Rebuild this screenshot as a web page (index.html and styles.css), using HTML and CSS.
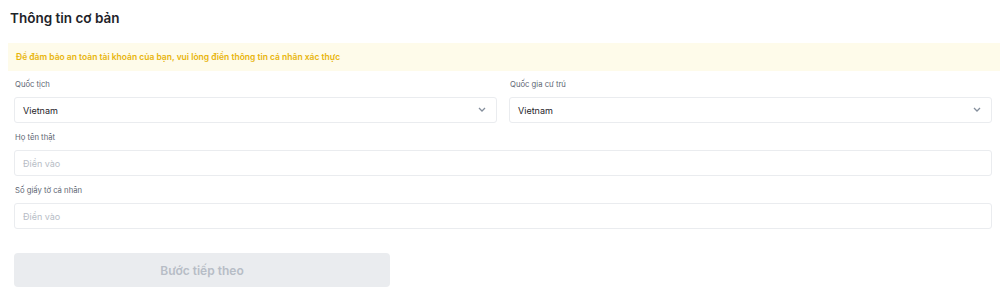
FILE: index.html
```html
<!DOCTYPE html>
<html lang="vi">
<head>
    <meta charset="UTF-8" />
    <title>Thông tin cơ bản</title>
    <link rel="stylesheet" href="styles.css">
</head>
<body>

<div class="page">
    <h2 class="title">Thông tin cơ bản</h2>

    <div class="notice">Để đảm bảo an toàn tài khoản của bạn, vui lòng điền thông tin cá nhân xác thực</div>

    <form class="form">
        <div class="row">
            <div class="field">
                <label>Quốc tịch</label>
                <div class="box select">
                    <span>Vietnam</span>
                    <svg class="chev" width="8" height="5" viewBox="0 0 8 5"><path d="M1 1l3 3 3-3" fill="none" stroke="#848e9c" stroke-width="1.3"/></svg>
                </div>
            </div>
            <div class="field">
                <label>Quốc gia cư trú</label>
                <div class="box select">
                    <span>Vietnam</span>
                    <svg class="chev" width="8" height="5" viewBox="0 0 8 5"><path d="M1 1l3 3 3-3" fill="none" stroke="#848e9c" stroke-width="1.3"/></svg>
                </div>
            </div>
        </div>

        <div class="field">
            <label>Họ tên thật</label>
            <div class="box"><span class="ph">Điền vào</span></div>
        </div>

        <div class="field">
            <label>Số giấy tờ cá nhân</label>
            <div class="box"><span class="ph">Điền vào</span></div>
        </div>

        <button type="button" class="next" disabled>Bước tiếp theo</button>
    </form>
</div>

</body>
</html>
```

FILE: styles.css
```css
body {
    margin: 0;
    background: #fff;
    font-family: Inter, "Noto Sans", sans-serif;
    color: #1e2329;
}

.page {
    padding: 8px 0 0 8px;
}

.title {
    margin: 0 0 0 2px;
    font-size: 13.5px;
    font-weight: 600;
    line-height: 20px;
}

.notice {
    margin-top: 15px;
    height: 28px;
    line-height: 28px;
    padding-left: 8px;
    background: #fefbea;
    color: #e8b50c;
    font-size: 8.5px;
    font-weight: 600;
}

.form {
    padding: 7px 8px 0 6px;
}

.row {
    display: flex;
    gap: 12px;
}

.row .field {
    flex: 1;
}

.field {
    margin-bottom: 8px;
}

.field label {
    display: block;
    font-size: 7.7px;
    color: #5e6673;
    line-height: 14px;
    padding: 0 1px;
    margin-bottom: 5px;
}

.box {
    height: 24px;
    border: 1px solid #eaecef;
    border-radius: 3px;
    display: flex;
    align-items: center;
    justify-content: space-between;
    padding: 0 10px 0 8px;
    font-size: 9px;
    color: #1e2329;
}

.ph {
    color: #b7bdc6;
}

.chev {
    margin-top: -1px;
}

.next {
    margin-top: 16px;
    width: 376px;
    height: 34px;
    border: none;
    border-radius: 4px;
    background: #eaecef;
    color: #b7bdc6;
    font-family: inherit;
    font-size: 12px;
    font-weight: 600;
}
```
